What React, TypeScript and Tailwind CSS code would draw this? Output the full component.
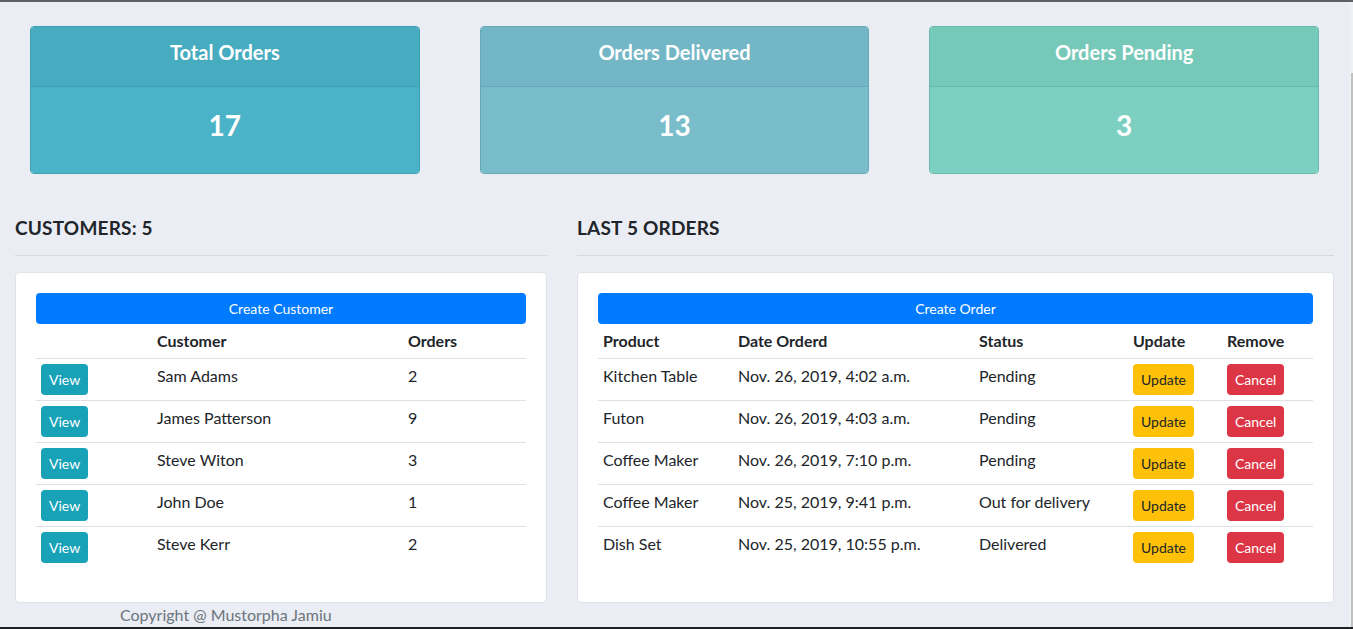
import React from 'react';

const font = { fontFamily: 'Lato, "Noto Sans", "Liberation Sans", sans-serif' };

const stats = [
  { title: 'Total Orders', value: 17, head: 'bg-[#48acc0]', body: 'bg-[#4bb3c7]', border: 'border-[#3d9fb2]' },
  { title: 'Orders Delivered', value: 13, head: 'bg-[#73b6c5]', body: 'bg-[#79bdcb]', border: 'border-[#66a8b7]' },
  { title: 'Orders Pending', value: 3, head: 'bg-[#76c9b9]', body: 'bg-[#7dd0c1]', border: 'border-[#68b9a9]' },
];

const customers = [
  { name: 'Sam Adams', orders: 2 },
  { name: 'James Patterson', orders: 9 },
  { name: 'Steve Witon', orders: 3 },
  { name: 'John Doe', orders: 1 },
  { name: 'Steve Kerr', orders: 2 },
];

const orders = [
  { product: 'Kitchen Table', date: 'Nov. 26, 2019, 4:02 a.m.', status: 'Pending' },
  { product: 'Futon', date: 'Nov. 26, 2019, 4:03 a.m.', status: 'Pending' },
  { product: 'Coffee Maker', date: 'Nov. 26, 2019, 7:10 p.m.', status: 'Pending' },
  { product: 'Coffee Maker', date: 'Nov. 25, 2019, 9:41 p.m.', status: 'Out for delivery' },
  { product: 'Dish Set', date: 'Nov. 25, 2019, 10:55 p.m.', status: 'Delivered' },
];

const StatCard = ({ s }: { s: (typeof stats)[number] }) => (
  <div className="px-[30px]">
    <div className={`border ${s.border} rounded-[4px] overflow-hidden text-white text-center`}>
      <div className={`${s.head} h-[60px] pt-[15px] border-b ${s.border}`}>
        <h5 className="text-[20px] font-bold leading-[20px]">{s.title}</h5>
      </div>
      <div className={`${s.body} h-[86px] pt-[24px]`}>
        <h3 className="text-[28px] font-bold leading-[28px]">{s.value}</h3>
      </div>
    </div>
  </div>
);

const SectionTitle = ({ children }: { children: React.ReactNode }) => (
  <>
    <h5 className="text-[19px] font-bold text-[#212529] leading-[24px] tracking-[0.2px]">{children}</h5>
    <hr className="mt-[15px] mb-[16px] border-t border-[#d6d9df]" />
  </>
);

const Btn = ({ label, color }: { label: string; color: string }) => (
  <button className={`${color} h-[31px] px-[8px] text-[14px] leading-[21px] rounded-[4px]`}>{label}</button>
);

export default function App() {
  return (
    <div className="h-[629px] overflow-hidden flex flex-col bg-[#eaedf4]" style={font}>
      <div className="h-[2px] bg-[#5d6067] shrink-0" />
      <div className="flex flex-1 min-h-0">
        <div className="w-[1349px] shrink-0">
          <div className="grid grid-cols-3 mt-[24px]">
            {stats.map((s) => (
              <StatCard key={s.title} s={s} />
            ))}
          </div>

          <div className="grid grid-cols-[562px_1fr] mt-[42px] w-[1349px]">
            <div className="px-[15px]">
              <SectionTitle>CUSTOMERS: 5</SectionTitle>
              <div className="bg-white border border-[#dfe2e8] rounded-[4px] px-[20px] pt-[20px] pb-[34px]">
                <button className="w-full h-[31px] bg-[#007bff] text-white text-[14px] rounded-[4px]">Create Customer</button>
                <table className="w-full table-fixed text-[16px] text-[#212529]">
                  <thead>
                    <tr className="leading-[24px]">
                      <th className="w-[116px] p-[5px]" />
                      <th className="w-[251px] p-[5px] text-left font-bold">Customer</th>
                      <th className="p-[5px] text-left font-bold">Orders</th>
                    </tr>
                  </thead>
                  <tbody>
                    {customers.map((c) => (
                      <tr key={c.name} className="border-t border-[#dee2e6] leading-[24px] align-top">
                        <td className="p-[5px]">
                          <Btn label="View" color="bg-[#17a2b8] text-white" />
                        </td>
                        <td className="p-[5px]">{c.name}</td>
                        <td className="p-[5px]">{c.orders}</td>
                      </tr>
                    ))}
                  </tbody>
                </table>
              </div>
              <p className="pl-[105px] text-[16px] leading-[24px] text-[#6c757d]">Copyright @ Mustorpha Jamiu</p>
            </div>

            <div className="px-[15px]">
              <SectionTitle>LAST 5 ORDERS</SectionTitle>
              <div className="bg-white border border-[#dfe2e8] rounded-[4px] px-[20px] pt-[20px] pb-[34px]">
                <button className="w-full h-[31px] bg-[#007bff] text-white text-[14px] rounded-[4px]">Create Order</button>
                <table className="w-full table-fixed text-[16px] text-[#212529]">
                  <thead>
                    <tr className="leading-[24px]">
                      <th className="w-[135px] p-[5px] text-left font-bold">Product</th>
                      <th className="w-[241px] p-[5px] text-left font-bold">Date Orderd</th>
                      <th className="w-[154px] p-[5px] text-left font-bold">Status</th>
                      <th className="w-[94px] p-[5px] text-left font-bold">Update</th>
                      <th className="p-[5px] text-left font-bold">Remove</th>
                    </tr>
                  </thead>
                  <tbody>
                    {orders.map((o, i) => (
                      <tr key={i} className="border-t border-[#dee2e6] leading-[24px] align-top">
                        <td className="p-[5px]">{o.product}</td>
                        <td className="p-[5px]">{o.date}</td>
                        <td className="p-[5px]">{o.status}</td>
                        <td className="p-[5px]">
                          <Btn label="Update" color="bg-[#ffc107] text-[#212529]" />
                        </td>
                        <td className="p-[5px]">
                          <Btn label="Cancel" color="bg-[#dc3545] text-white" />
                        </td>
                      </tr>
                    ))}
                  </tbody>
                </table>
              </div>
            </div>
          </div>
        </div>
        <div className="w-[4px] shrink-0 flex flex-col bg-[#eef0f4]">
          <div className="h-[71px]" />
          <div className="flex-1 ml-[2px] bg-[#c1c1c1]" />
        </div>
      </div>
      <div className="h-[2px] bg-[#202124] shrink-0" />
    </div>
  );
}
